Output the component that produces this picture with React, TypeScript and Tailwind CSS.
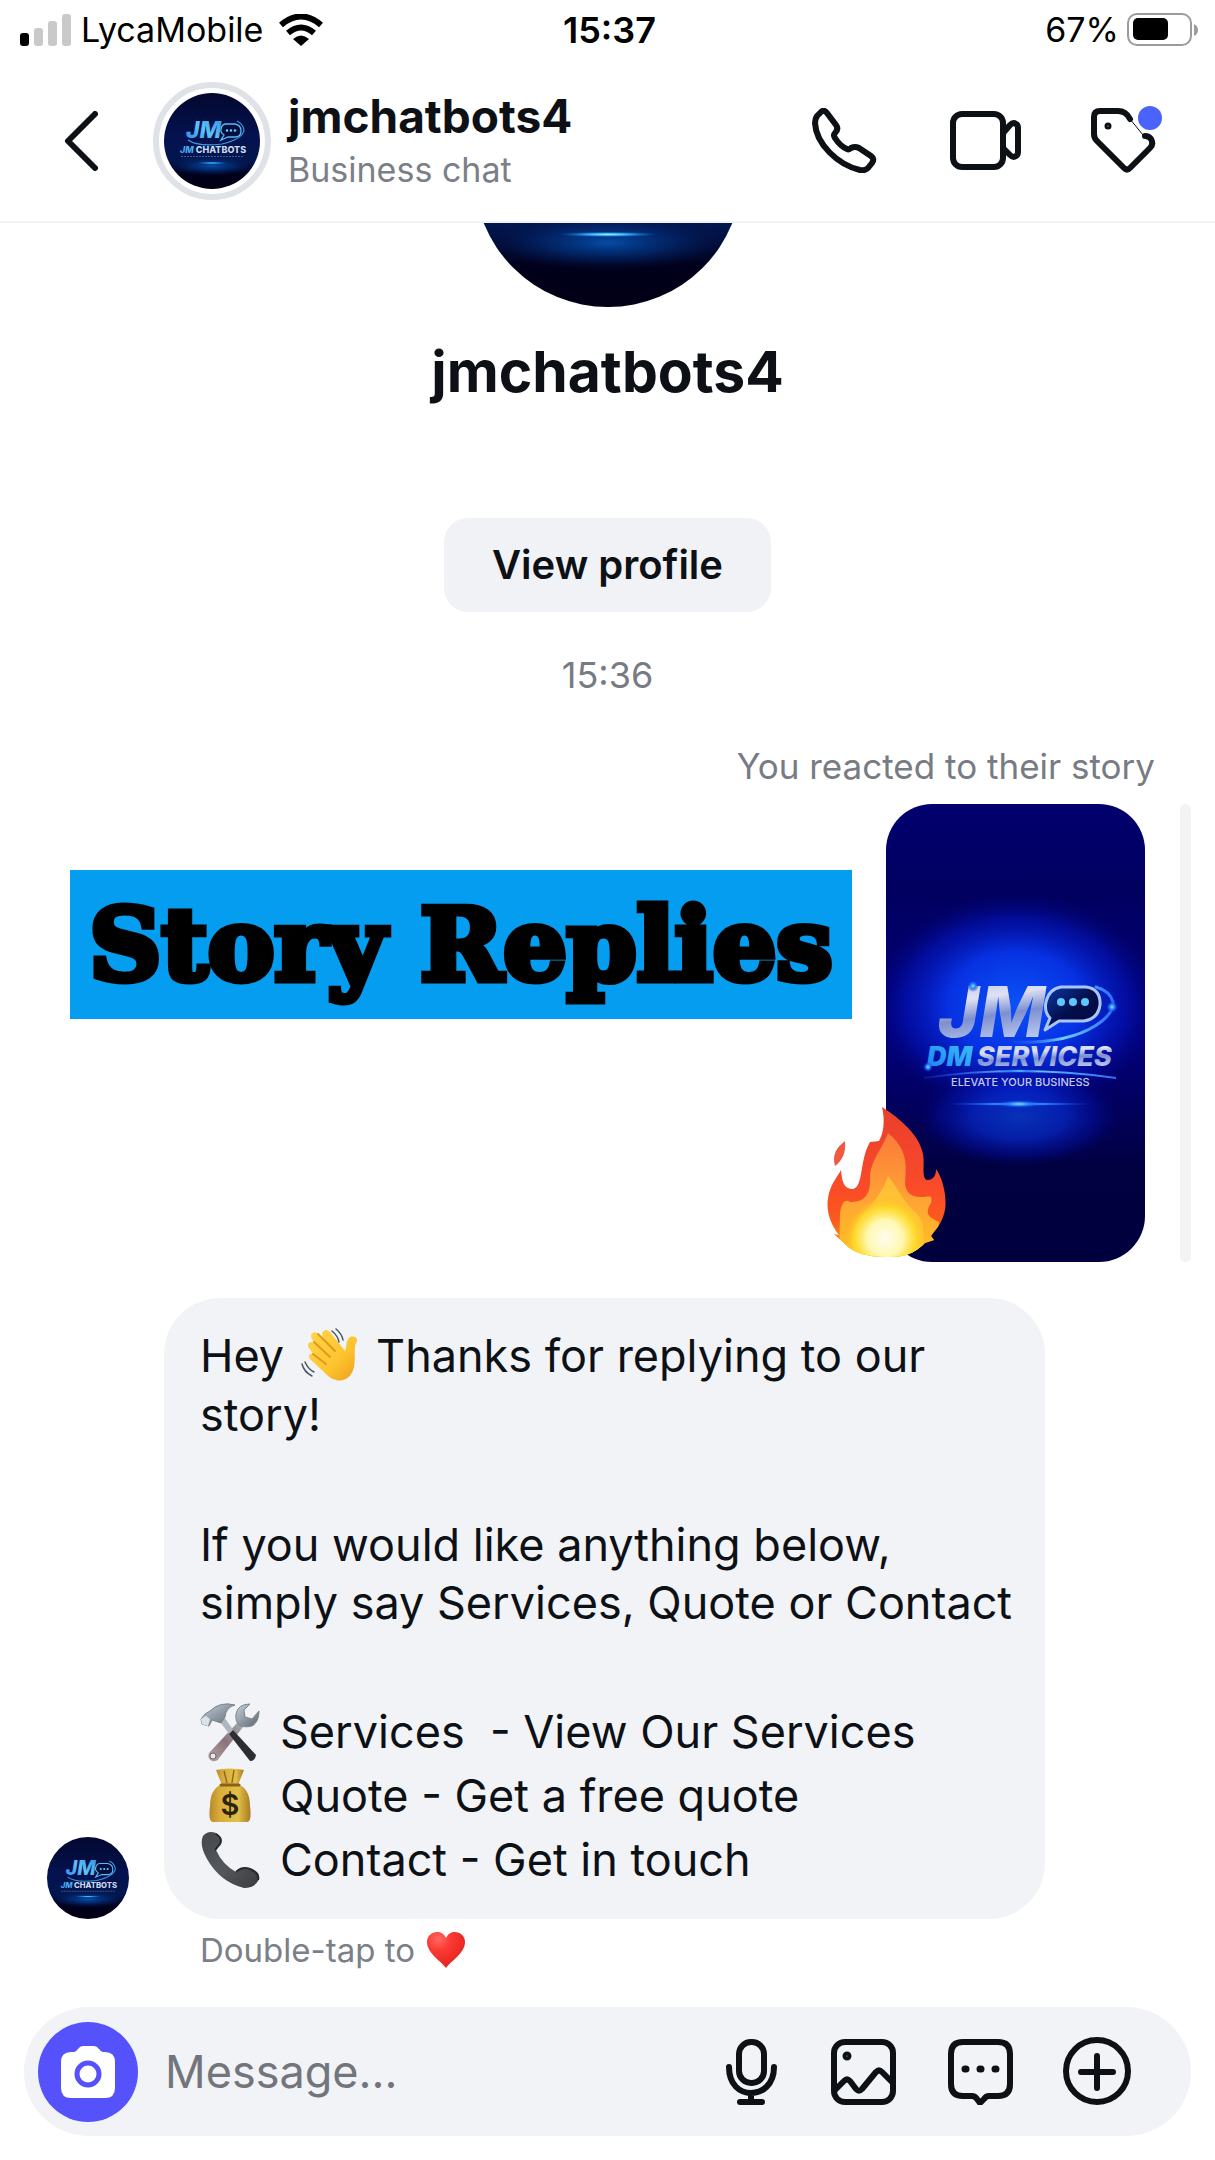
import { useId } from "react";
import type { ReactNode } from "react";

/* ---------- brand artwork ---------- */

function BrandAvatar({ className, wordmark = true }: { className: string; wordmark?: boolean }) {
  const id = useId();
  return (
    <svg viewBox="0 0 96 96" role="img" aria-label="jmchatbots4" className={className}>
      <defs>
        <linearGradient id={id + "bg"} x1="0" y1="0" x2="0" y2="1">
          <stop offset="0" stopColor="#03082f" />
          <stop offset="0.45" stopColor="#04124f" />
          <stop offset="0.7" stopColor="#02164e" />
          <stop offset="0.84" stopColor="#01001c" />
          <stop offset="1" stopColor="#010014" />
        </linearGradient>
        <radialGradient id={id + "halo"}>
          <stop offset="0" stopColor="#0453b4" stopOpacity="0.9" />
          <stop offset="0.5" stopColor="#033b8f" stopOpacity="0.5" />
          <stop offset="1" stopColor="#021c5c" stopOpacity="0" />
        </radialGradient>
        <radialGradient id={id + "beam"}>
          <stop offset="0" stopColor="#a8f4ff" />
          <stop offset="0.45" stopColor="#2f9fee" />
          <stop offset="1" stopColor="#0453b4" stopOpacity="0" />
        </radialGradient>
        <linearGradient id={id + "jm"} x1="0" y1="1" x2="1" y2="0">
          <stop offset="0" stopColor="#2b7fe0" />
          <stop offset="0.5" stopColor="#5cc4f5" />
          <stop offset="1" stopColor="#2f8fe8" />
        </linearGradient>
        <clipPath id={id + "clip"}>
          <circle cx="48" cy="48" r="48" />
        </clipPath>
      </defs>
      <g clipPath={`url(#${id}clip)`}>
        <rect width="96" height="96" fill={`url(#${id}bg)`} />
        <ellipse cx="48" cy="73" rx="44" ry="10" fill={`url(#${id}halo)`} />
        <ellipse cx="48" cy="70" rx="18" ry="1" fill={`url(#${id}beam)`} />
        {wordmark && (
          <>
            <text x="22" y="45" fontFamily="Inter, sans-serif" fontSize="23" fontWeight="800" fontStyle="italic" fill={`url(#${id}jm)`}>JM</text>
            <path d="M62 31H71Q77 32 77 38T71 44H64L57 47L60 42Q56 39 57 36Q58 31 62 31Z" fill="#03103f" stroke="#5fb9ee" strokeWidth="1.3" />
            <circle cx="63" cy="37.5" r="1.2" fill="#6fd3ff" />
            <circle cx="67" cy="37.5" r="1.2" fill="#6fd3ff" />
            <circle cx="71" cy="37.5" r="1.2" fill="#6fd3ff" />
            <path d="M24 47Q34 54 58 51Q79 46 80 37Q79 31 73 28" fill="none" stroke="#3c9be6" strokeWidth="1.2" />
            <text x="16" y="60" fontFamily="Inter, sans-serif" fontSize="9" fontWeight="800" fill="#c9d8ee">
              <tspan fill="#4aa8ee" fontStyle="italic">JM</tspan> CHATBOTS
            </text>
            <path d="M17 63.5H79" stroke="#3c5c94" strokeWidth="1.2" strokeDasharray="2 1" />
          </>
        )}
      </g>
    </svg>
  );
}

function StoryArtwork() {
  return (
    <svg viewBox="0 0 259 458" role="img" aria-label="JM DM Services story" className="block w-full">
      <defs>
        <linearGradient id="storyBg" x1="0" y1="0" x2="0" y2="1">
          <stop offset="0" stopColor="#01006e" />
          <stop offset="0.2" stopColor="#010060" />
          <stop offset="0.5" stopColor="#02007e" />
          <stop offset="0.8" stopColor="#010040" />
          <stop offset="1" stopColor="#01003e" />
        </linearGradient>
        <radialGradient id="storyGlow">
          <stop offset="0" stopColor="#0b52f8" />
          <stop offset="0.45" stopColor="#0734e8" stopOpacity="0.95" />
          <stop offset="0.75" stopColor="#0314b8" stopOpacity="0.6" />
          <stop offset="1" stopColor="#010060" stopOpacity="0" />
        </radialGradient>
        <radialGradient id="storyBeam">
          <stop offset="0" stopColor="#8fdcff" />
          <stop offset="0.4" stopColor="#2a86ff" />
          <stop offset="1" stopColor="#0731e4" stopOpacity="0" />
        </radialGradient>
        <linearGradient id="storySilver" x1="0" y1="0" x2="0.2" y2="1">
          <stop offset="0" stopColor="#a9b4dc" />
          <stop offset="0.4" stopColor="#dfe2f3" />
          <stop offset="0.62" stopColor="#7d8fd0" />
          <stop offset="1" stopColor="#c6d4f4" />
        </linearGradient>
        <linearGradient id="storyCyan" x1="0" y1="1" x2="1" y2="0">
          <stop offset="0" stopColor="#1c7ff0" />
          <stop offset="1" stopColor="#3cc2fa" />
        </linearGradient>
        <linearGradient id="storySwoosh" x1="0" y1="0" x2="1" y2="0">
          <stop offset="0" stopColor="#1a56ff" stopOpacity="0.2" />
          <stop offset="0.5" stopColor="#6fd0ff" />
          <stop offset="1" stopColor="#2c6cff" />
        </linearGradient>
        <linearGradient id="storyBubble" x1="0" y1="0" x2="1" y2="1">
          <stop offset="0" stopColor="#0a3aa8" />
          <stop offset="0.5" stopColor="#040e4c" />
          <stop offset="1" stopColor="#030a3c" />
        </linearGradient>
      </defs>
      <rect width="259" height="458" fill="url(#storyBg)" />
      <ellipse cx="130" cy="200" rx="150" ry="115" fill="url(#storyGlow)" />
      <ellipse cx="133" cy="312" rx="105" ry="52" fill="url(#storyGlow)" opacity="0.6" />
      <ellipse cx="133" cy="300" rx="75" ry="2" fill="url(#storyBeam)" />
      <ellipse cx="133" cy="300" rx="24" ry="4" fill="url(#storyBeam)" />
      <text x="52" y="233" fontFamily="Inter, sans-serif" fontSize="70" fontWeight="800" fontStyle="italic" fill="url(#storySilver)">JM</text>
      <path d="M126 238Q180 240 209 222Q228 210 227 198Q224 187 210 183" fill="none" stroke="url(#storySwoosh)" strokeWidth="3" strokeLinecap="round" />
      <path d="M175 183H200Q215 185 214 201Q212 215 198 217H173L159 226L164 214Q158 208 160 198Q163 185 175 183Z" fill="url(#storyBubble)" stroke="#a9c6f4" strokeWidth="3" strokeLinejoin="round" />
      <circle cx="175" cy="198" r="4" fill="#5ec8fb" />
      <circle cx="187" cy="198" r="4" fill="#5ec8fb" />
      <circle cx="199" cy="198" r="4" fill="#5ec8fb" />
      <circle cx="226" cy="203" r="6" fill="url(#storyBeam)" />
      <circle cx="87" cy="182" r="6" fill="url(#storyBeam)" />
      <text x="41" y="262" fontFamily="Inter, sans-serif" fontSize="27" fontWeight="900" fontStyle="italic" fill="url(#storyCyan)">DM</text>
      <text x="91" y="262" fontFamily="Inter, sans-serif" fontSize="27" fontWeight="800" fontStyle="italic" fill="url(#storySilver)">SERVICES</text>
      <circle cx="42" cy="263" r="5" fill="url(#storyBeam)" />
      <path d="M38 274Q133 260 230 274" fill="none" stroke="url(#storySwoosh)" strokeWidth="2" />
      <ellipse cx="133" cy="267" rx="20" ry="2" fill="url(#storyBeam)" />
      <text x="65" y="282" fontFamily="Inter, sans-serif" fontSize="11" fontWeight="500" fill="#c3cbf2">ELEVATE YOUR BUSINESS</text>
    </svg>
  );
}

/* ---------- emoji ---------- */

function Fire({ className }: { className: string }) {
  return (
    <svg viewBox="0 0 120 152" role="img" aria-label="Fire" className={className}>
      <defs>
        <linearGradient id="fireOuter" x1="0" y1="0" x2="0" y2="1">
          <stop offset="0" stopColor="#e8402c" />
          <stop offset="0.5" stopColor="#f9492a" />
          <stop offset="0.75" stopColor="#fb5a1c" />
          <stop offset="1" stopColor="#fda91a" />
        </linearGradient>
        <linearGradient id="fireInner" x1="0" y1="0" x2="0" y2="1">
          <stop offset="0" stopColor="#fc7a3a" />
          <stop offset="0.5" stopColor="#ffa136" />
          <stop offset="1" stopColor="#ffc21f" />
        </linearGradient>
        <radialGradient id="fireCore">
          <stop offset="0" stopColor="#fffdf0" />
          <stop offset="0.45" stopColor="#fff8b0" />
          <stop offset="0.75" stopColor="#ffe031" stopOpacity="0.8" />
          <stop offset="1" stopColor="#ffc21f" stopOpacity="0" />
        </radialGradient>
        <clipPath id="fireClip">
          <path d="M55 1C66 8 92 26 96 48C98 58 94 72 100 74C107 74 109 69 109 63C117 74 121 96 117 108C114 119 108 124 104 130L107 134L98 137C84 151 72 151 59 151C44 151 27 148 18 138L7 128L12 129C3 118-1 104 1 92C3 79 9 73 14 64C15 76 17 83 26 83C37 80 32 55 43 36L52 35C57 27 58 14 55 1Z" />
        </clipPath>
      </defs>
      <path d="M18 35C9 42 5 49 8 60C16 54 19 46 18 35Z" fill="#ee5940" />
      <g clipPath="url(#fireClip)">
        <rect width="120" height="152" fill="url(#fireOuter)" />
        <path d="M61 27C82 44 79 62 78 76C78 87 85 91 94 91C102 91 106 88 104 97C96 109 104 112 112 116L108 152H12L13 108C14 99 17 92 23 96C38 97 44 87 43 72C43 55 55 44 61 27Z" fill="url(#fireInner)" />
        <path d="M61 70C72 83 76 96 88 106C96 113 98 120 96 152H25C22 122 34 111 41 103C48 94 57 83 61 70Z" fill="#ffce35" opacity="0.7" />
        <ellipse cx="58" cy="132" rx="40" ry="40" fill="url(#fireCore)" />
      </g>
    </svg>
  );
}

function EmojiSlot({ label, children }: { label: string; children: ReactNode }) {
  return (
    <svg viewBox="0 0 60 60" role="img" aria-label={label} className="size-[60px] shrink-0">
      {children}
    </svg>
  );
}

function Wave() {
  return (
    <EmojiSlot label="Waving hand">
      <defs>
        <linearGradient id="waveSkin" x1="0" y1="0" x2="1" y2="1">
          <stop offset="0" stopColor="#ffd64a" />
          <stop offset="0.6" stopColor="#fdc42f" />
          <stop offset="1" stopColor="#ee9f1c" />
        </linearGradient>
      </defs>
      <path d="M25 47L10 33C7 29 11 26 14 29L9 22C6 18 10 14 14 17L12 13C9 8 14 4 18 8L23 11C20 6 26 1 30 6L45 25C47 21 45 17 49 12C52 9 58 11 57 15C53 22 56 31 54 41C51 55 37 60 25 47Z" fill="url(#waveSkin)" />
      <path d="M18 8L35 25M14 16L30 31M13 28L26 38" fill="none" stroke="#e2991d" strokeWidth="2" strokeLinecap="round" />
      <path d="M32 5Q38 10 39 16M36 3Q42 8 43 14M2 38Q4 46 12 50M5 36Q8 43 14 46" fill="none" stroke="#4b5563" strokeWidth="1.5" strokeLinecap="round" />
    </EmojiSlot>
  );
}

function Tools() {
  return (
    <EmojiSlot label="Hammer and wrench">
      <defs>
        <linearGradient id="steel" x1="0" y1="0" x2="1" y2="1">
          <stop offset="0" stopColor="#c9d2da" />
          <stop offset="0.5" stopColor="#8f9aa5" />
          <stop offset="1" stopColor="#5e6770" />
        </linearGradient>
        <linearGradient id="grip" x1="1" y1="0" x2="0" y2="1">
          <stop offset="0" stopColor="#a5a9ae" />
          <stop offset="0.5" stopColor="#8a7478" />
          <stop offset="1" stopColor="#b3a6a8" />
        </linearGradient>
      </defs>
      <path d="M37 21L9 51Q7 57 12 59Q17 60 19 56L43 25Z" fill="url(#grip)" />
      <circle cx="13" cy="54" r="3" fill="#e7e9ec" stroke="#6f6466" strokeWidth="1" />
      <path d="M50 2Q38 2 36 12Q35 19 39 23Q44 26 52 24Q59 20 59 9L52 17L45 15L44 8Z" fill="url(#steel)" stroke="#7b858e" strokeWidth="1" />
      <path d="M24 15L34 29L30 33L20 20Z" fill="#aeb7c0" />
      <path d="M33 28L56 53Q55 59 50 59L29 32Z" fill="#2c2e31" />
      <path d="M1 17L5 12L10 9Q20-1 35 3Q26 5 25 15L21 21L12 18L9 24L2 22Z" fill="url(#steel)" stroke="#7b858e" strokeWidth="1" />
      <path d="M1 17L6 14L10 17L8 24L2 22Z" fill="#d8e3ea" />
    </EmojiSlot>
  );
}

function MoneyBag() {
  return (
    <EmojiSlot label="Money bag">
      <defs>
        <linearGradient id="sack" x1="0" y1="0" x2="1" y2="0">
          <stop offset="0" stopColor="#b8892a" />
          <stop offset="0.25" stopColor="#d8ad3c" />
          <stop offset="0.7" stopColor="#e4bf48" />
          <stop offset="1" stopColor="#a87a24" />
        </linearGradient>
      </defs>
      <path d="M16 4Q30 1 44 4L38 19H22Z" fill="url(#sack)" />
      <path d="M24 5L27 17M34 4L32 17" stroke="#93681c" strokeWidth="1.5" />
      <path d="M22 18H38Q50 23 50 40Q52 56 47 56H13Q8 56 10 40Q10 23 22 18Z" fill="url(#sack)" />
      <path d="M21 19H39" stroke="#8c611a" strokeWidth="3" strokeLinecap="round" />
      <text x="30" y="49" textAnchor="middle" fontFamily="Inter, sans-serif" fontSize="29" fontWeight="600" fill="#2d2410">$</text>
    </EmojiSlot>
  );
}

function Receiver() {
  return (
    <EmojiSlot label="Telephone receiver">
      <defs>
        <linearGradient id="handset" x1="0" y1="0" x2="1" y2="1">
          <stop offset="0" stopColor="#43464a" />
          <stop offset="0.5" stopColor="#55585c" />
          <stop offset="1" stopColor="#3a3c40" />
        </linearGradient>
      </defs>
      <path d="M3 6Q8 0 16 3Q22 7 20 14L16 20Q22 34 36 42Q42 36 50 39Q60 43 58 51Q54 58 44 58Q20 52 7 29Q-1 15 3 6Z" fill="url(#handset)" />
      <path d="M16 4Q23 8 20 14L15 20M36 42Q42 36 50 39Q60 43 58 50" fill="none" stroke="#26282b" strokeWidth="2" />
    </EmojiSlot>
  );
}

function Heart() {
  return (
    <svg viewBox="0 0 38 38" role="img" aria-label="heart" className="size-[38px]">
      <defs>
        <radialGradient id="heartRed" cx="0.3" cy="0.2" r="0.9">
          <stop offset="0" stopColor="#ff6a62" />
          <stop offset="0.35" stopColor="#fb3a35" />
          <stop offset="1" stopColor="#e01f1c" />
        </radialGradient>
      </defs>
      <path d="M19 37C13 29 0 22 0 11C0 0 15-3 19 7C23-3 38 0 38 11C38 22 25 29 19 37Z" fill="url(#heartRed)" />
    </svg>
  );
}

/* ---------- line icons ---------- */

function Icon({ box, className, children }: { box: string; className: string; children: ReactNode }) {
  return (
    <svg viewBox={box} aria-hidden="true" fill="none" stroke="currentColor" strokeWidth="6" strokeLinecap="round" strokeLinejoin="round" className={className}>
      {children}
    </svg>
  );
}

function StatusBar() {
  return (
    <div className="grid h-[60px] grid-cols-3 items-center pr-4 pl-5 text-[34px] leading-none text-black">
      <div className="flex items-center">
        <svg viewBox="0 0 51 32" aria-label="Signal" role="img" className="h-8 w-[51px]">
          <rect x="0" y="19" width="9" height="13" rx="3" fill="#000" />
          <rect x="14" y="14" width="9" height="18" rx="3" fill="#c9c9c9" />
          <rect x="28" y="7" width="9" height="25" rx="3" fill="#c9c9c9" />
          <rect x="42" y="0" width="9" height="32" rx="3" fill="#c9c9c9" />
        </svg>
        <span className="ml-[10px]">LycaMobile</span>
        <svg viewBox="0 0 44 32" aria-label="Wi-Fi" role="img" className="ml-4 h-8 w-11">
          <path d="M2 11Q22-6 42 11" fill="none" stroke="#000" strokeWidth="6" />
          <path d="M9 19Q22 8 35 19" fill="none" stroke="#000" strokeWidth="6" />
          <path d="M14 25Q22 18 30 25L22 32Z" fill="#000" />
        </svg>
      </div>
      <span className="text-center text-[36px] font-semibold">15:37</span>
      <div className="flex items-center justify-end">
        <span>67%</span>
        <svg viewBox="0 0 72 34" aria-label="Battery" role="img" className="ml-2 h-[34px] w-[72px]">
          <rect x="1" y="1" width="63" height="31" rx="9" fill="none" stroke="#9b9b9b" strokeWidth="2" />
          <rect x="6" y="5" width="35" height="22" rx="5" fill="#000" />
          <path d="M67 11Q71 13 71 17T67 23Z" fill="#9b9b9b" />
        </svg>
      </div>
    </div>
  );
}

function ChatHeader() {
  return (
    <header className="flex h-[163px] items-center border-b-2 border-[#f3f3f5] pr-[53px] pl-16">
      <button type="button" aria-label="Back">
        <Icon box="0 0 34 60" className="h-[60px] w-[34px]"><path d="M31 3L4 30L31 57" /></Icon>
      </button>
      <div className="ml-[55px] flex size-[118px] items-center justify-center rounded-full border-[6px] border-[#dfe2e7]">
        <BrandAvatar className="size-24" />
      </div>
      <div className="ml-[17px] flex flex-col pt-1">
        <h1 className="text-[46px] leading-[54px] font-bold">jmchatbots4</h1>
        <p className="text-[34px] leading-[54px] text-[#7b7f87]">Business chat</p>
      </div>
      <div className="ml-auto flex items-center">
        <button type="button" aria-label="Audio call">
          <Icon box="0 0 65 65" className="size-[65px]">
            <path d="M9 4Q12 1 15 5L24 17Q27 21 23 25Q21 27 23 30Q28 38 35 41Q37 42 39 40Q43 38 47 40L59 48Q63 51 60 55L56 60Q53 63 48 62C26 57 4 36 3 15Q3 11 5 8Z" />
          </Icon>
        </button>
        <button type="button" aria-label="Video call" className="ml-[73px]">
          <Icon box="0 0 71 59" className="h-[59px] w-[71px]">
            <rect x="3" y="3" width="50" height="53" rx="9" />
            <path d="M54 21L60 14Q63 11 66 13Q68 14 68 17V41Q68 44 66 45Q63 47 60 44L54 38" />
          </Icon>
        </button>
        <button type="button" aria-label="Labels" className="relative ml-[70px]">
          <Icon box="0 0 71 65" className="h-[65px] w-[71px]">
            <path d="M39 11Q35 3 27 3H9Q3 3 3 9V26Q3 30 6 33L33 60Q36 63 39 60L59 40Q63 36 60 31Q58 28 54 28" />
            <path d="M39 11L52 27" strokeWidth="1" />
            <circle cx="17" cy="18" r="1.5" strokeWidth="4" />
          </Icon>
          <span className="absolute top-[-2px] right-0 size-6 rounded-full bg-[#4a63fb]" />
        </button>
      </div>
    </header>
  );
}

function Composer() {
  return (
    <form className="mx-6 mb-6 flex h-[129px] items-center rounded-full bg-[#f1f3f6] pr-[59px] pl-[14px]" onSubmit={(e) => e.preventDefault()}>
      <button type="button" aria-label="Camera" className="flex size-[100px] shrink-0 items-center justify-center rounded-full bg-[#5552fb]">
        <svg viewBox="0 0 54 52" aria-hidden="true" className="h-[52px] w-[54px]">
          <path d="M10 6H13Q15 6 17 3Q19 0 22 0H33Q36 0 38 3Q40 6 42 6H44Q54 6 54 16V42Q54 52 44 52H10Q0 52 0 42V16Q0 6 10 6Z" fill="#fff" />
          <circle cx="27" cy="28" r="11" fill="none" stroke="#5552fb" strokeWidth="5" />
        </svg>
      </button>
      <input type="text" aria-label="Message" placeholder="Message..." className="ml-[27px] min-w-0 flex-1 bg-transparent text-[45px] outline-none placeholder:text-[#72757c]" />
      <div className="flex shrink-0 items-center">
        <button type="button" aria-label="Record voice message">
          <Icon box="0 0 51 66" className="h-[66px] w-[51px]">
            <rect x="13" y="3" width="25" height="41" rx="12" />
            <path d="M3 28C3 46 14 54 25 54S48 46 48 28M25 54V62M14 63H36" />
          </Icon>
        </button>
        <button type="button" aria-label="Photo library" className="ml-[54px]">
          <Icon box="0 0 65 66" className="h-[66px] w-[65px]">
            <rect x="3" y="3" width="59" height="60" rx="11" />
            <path d="M4 51L13 42Q16 39 19 42L25 50Q28 53 31 50L45 33Q48 30 51 33L61 43" />
            <circle cx="16" cy="17" r="2" strokeWidth="5" />
          </Icon>
        </button>
        <button type="button" aria-label="Saved replies" className="ml-[52px]">
          <Icon box="0 0 65 66" className="h-[66px] w-[65px]">
            <path d="M15 3H50Q62 3 62 15V45Q62 57 50 57H41Q38 57 36 60L32 64L29 60Q27 57 24 57H15Q3 57 3 45V15Q3 3 15 3Z" />
            <path d="M17 30H18M32 30H33M47 30H48" strokeWidth="7" />
          </Icon>
        </button>
        <button type="button" aria-label="More" className="ml-[50px]">
          <Icon box="0 0 69 69" className="size-[69px]">
            <circle cx="34" cy="34" r="31" />
            <path d="M34 19V51M18 35H50" />
          </Icon>
        </button>
      </div>
    </form>
  );
}

export default function App() {
  return (
    <div className="flex min-h-screen flex-col bg-white font-['Inter',sans-serif] text-[#0d1116]">
      <StatusBar />
      <ChatHeader />

      <main className="flex flex-1 flex-col">
        <section className="flex flex-col items-center">
          <div className="flex h-[84px] items-end overflow-hidden">
            <BrandAvatar className="size-[268px] shrink-0" wordmark={false} />
          </div>
          <h2 className="mt-[30px] text-[57px] leading-[70px] font-bold">jmchatbots4</h2>
          <button type="button" className="mt-[111px] h-[94px] rounded-3xl bg-[#f0f2f5] px-12 text-[40px] font-semibold">
            View profile
          </button>
          <time className="mt-10 text-[36px] leading-[46px] text-[#777b83]">15:36</time>
        </section>

        <section className="mt-10 flex flex-col pr-6">
          <p className="self-end pr-9 text-[35px] leading-[56px] text-[#777b83]">You reacted to their story</p>
          <div className="mt-[10px] flex items-start pl-[70px]">
            <p className="mt-[66px] flex h-[149px] w-[782px] items-center justify-center bg-[#059df0] font-['DejaVu_Serif',serif] text-[100px] leading-none font-bold whitespace-nowrap text-black [-webkit-text-stroke:7px_black]">
              Story Replies
            </p>
            <div className="relative ml-auto w-[259px] shrink-0">
              <div className="overflow-hidden rounded-[46px]">
                <StoryArtwork />
              </div>
              <Fire className="absolute bottom-1 left-[-59px] h-[152px] w-[120px]" />
            </div>
            <div className="ml-[35px] w-[11px] self-stretch rounded-full bg-[#f3f3f4]" />
          </div>
        </section>

        <section className="mt-9 flex items-end pl-[47px]">
          <BrandAvatar className="size-[82px] shrink-0" />
          <div className="ml-[35px] flex h-[621px] flex-col rounded-[56px] bg-[#f1f3f6] pt-7 pr-[33px] pl-9 text-[45px] leading-[58px]">
            <p>
              <span className="flex items-center gap-4">Hey <Wave /> Thanks for replying to our</span>
              story!
            </p>
            <p className="mt-[72px]">
              If you would like anything below,
              <br />
              simply say Services, Quote or Contact
            </p>
            <ul className="mt-[68px] leading-[64px]">
              <li className="flex h-16 items-center gap-5"><Tools /><span className="whitespace-pre">Services  - View Our Services</span></li>
              <li className="flex h-16 items-center gap-5"><MoneyBag />Quote - Get a free quote</li>
              <li className="flex h-16 items-center gap-5"><Receiver />Contact - Get in touch</li>
            </ul>
          </div>
        </section>
        <p className="mt-3 flex items-center gap-3 pl-[200px] text-[33px] leading-[38px] text-[#7b7f87]">Double-tap to <Heart /></p>
      </main>

      <Composer />
    </div>
  );
}
